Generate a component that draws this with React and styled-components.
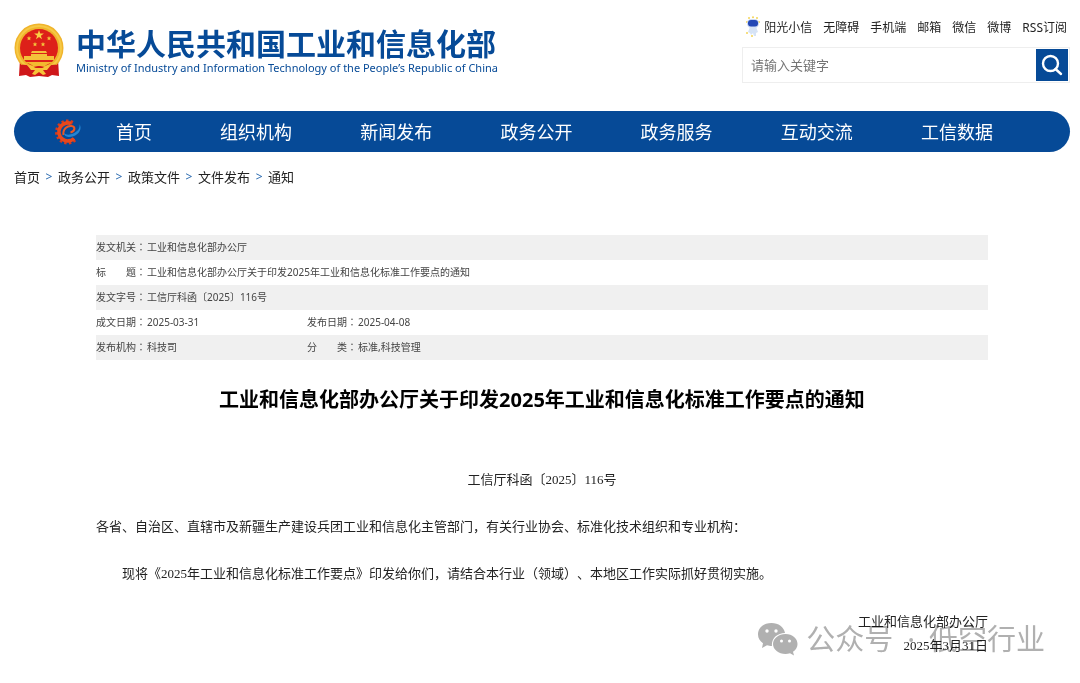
import React from "react";
import styled, { createGlobalStyle } from "styled-components";

const GlobalStyle = createGlobalStyle`
  * {
    box-sizing: border-box;
  }
  body {
    margin: 0;
    background-color: #ffffff;
    color: #222222;
    font-family: "Noto Sans", "Noto Sans CJK SC", sans-serif;
    font-size: 13px;
    text-spacing-trim: space-all;
  }
  a {
    color: inherit;
    text-decoration: none;
  }
`;

const Page = styled.div`
  padding: 16px 10px 16px 14px;
`;

const Header = styled.header`
  display: flex;
  justify-content: space-between;
  align-items: flex-start;
`;

const Brand = styled.a`
  display: flex;
  gap: 12px;
  padding-top: 7px;
`;

const BrandName = styled.h1`
  margin: 0;
  padding-top: 2px;
  color: #064a97;
  font-size: 30px;
  line-height: 37px;
  font-weight: 700;
  white-space: nowrap;
`;

const BrandSub = styled.p`
  margin: 0;
  color: #064a97;
  font-size: 11px;
  line-height: 12px;
  white-space: nowrap;
`;

const Tools = styled.div`
  width: 328px;
`;

const QuickLinks = styled.nav`
  display: flex;
  justify-content: flex-end;
  gap: 11px;
  padding-right: 3px;
  font-size: 12px;
  line-height: 24px;
  height: 31px;
  white-space: nowrap;
`;

const MascotLink = styled.a`
  display: flex;
  align-items: flex-start;
  gap: 4px;
`;

const Search = styled.form`
  display: flex;
  height: 36px;
  border: 1px solid #eeeeee;
`;

const SearchInput = styled.input`
  flex: 1;
  min-width: 0;
  border: none;
  outline: none;
  padding: 0 8px;
  font-family: inherit;
  font-size: 13px;
  &::placeholder {
    color: #757575;
  }
`;

const SearchButton = styled.button`
  display: flex;
  align-items: center;
  justify-content: center;
  width: 32px;
  height: 32px;
  margin: 1px;
  padding: 0;
  border: none;
  background-color: #064a97;
  cursor: pointer;
`;

const MainNav = styled.nav`
  display: flex;
  align-items: center;
  height: 41px;
  margin-top: 28px;
  padding: 0 43px 0 40px;
  border-radius: 21px;
  background-color: #064a97;
`;

const NavLink = styled.a`
  flex: ${(props) => (props.$home ? "0 0 104px" : "1")};
  padding-bottom: 2px;
  color: #ffffff;
  font-size: 18px;
  text-align: center;
  white-space: nowrap;
`;

const Breadcrumb = styled.nav`
  display: flex;
  gap: 5px;
  margin-top: 15px;
  line-height: 20px;
`;

const Arrow = styled.span`
  width: 8px;
  color: #2a6ab0;
  font-size: 12px;
  text-align: center;
`;

const Article = styled.main`
  margin: 48px 82px 0;
`;

const MetaTable = styled.table`
  width: 100%;
  border-collapse: collapse;
  table-layout: fixed;
  color: #444444;
  font-size: 10px;
  line-height: 15px;
`;

const MetaRow = styled.tr`
  height: 25px;
  &:nth-child(odd) {
    background-color: #f0f0f0;
  }
`;

const MetaLabel = styled.th`
  padding: 0;
  font-weight: 400;
  text-align: left;
  vertical-align: baseline;
  white-space: pre;
`;

const Colon = styled.span`
  font-family: "Noto Sans CJK TC", sans-serif;
`;

const MetaValue = styled.td`
  padding: 5px 0 4px;
  vertical-align: baseline;
`;

const Title = styled.h2`
  margin: 25px 0 0;
  color: #000000;
  font-size: 20px;
  line-height: 30px;
  text-align: center;
`;

const Content = styled.div`
  margin-top: 55px;
  font-family: "Liberation Serif", "Noto Sans CJK SC", serif;
`;

const DocNumber = styled.p`
  margin: 0;
  line-height: 20px;
  text-align: center;
`;

const Paragraph = styled.p`
  margin: 27px 0 0;
  line-height: 20px;
  text-indent: ${(props) => (props.$indent ? "2em" : "0")};
`;

const Signature = styled.div`
  position: relative;
  margin-top: 26px;
  line-height: 24px;
  text-align: right;
`;

const Watermark = styled.div`
  position: absolute;
  right: -57px;
  top: 5px;
  display: flex;
  align-items: center;
  gap: 14px;
  color: #b0b0b0;
  font-family: "Noto Sans", "Noto Sans CJK SC", sans-serif;
  font-size: 29px;
  line-height: 48px;
  white-space: nowrap;
  mix-blend-mode: multiply;
`;

const WatermarkName = styled.span`
  display: flex;
  align-items: center;
  gap: 8px;
`;

const Emblem = () => (
  <svg width="50" height="56" viewBox="0 0 50 56" aria-hidden="true">
    <path d="M6 36 5 53l7-1 4 2 9-1 9 1 4-2 7 1-1-17z" fill="#cf171a" />
    <circle cx="25" cy="25" r="24.500" fill="#f0b42c" />
    <circle cx="25" cy="25" r="22" fill="none" stroke="#f6c945" strokeWidth="2" />
    <circle cx="25" cy="25" r="19" fill="#dd2019" />
    <path d="m25 7 1.200 3.500h3.700l-3 2.200 1.100 3.600-3-2.200-3 2.200 1.100-3.600-3-2.200h3.700z" fill="#f9cf45" />
    <g fill="#f4c23a">
      <path d="m15 13 .7 1.400 1.600.2-1.200 1 .3 1.600-1.400-.8-1.400.8.3-1.600-1.200-1 1.600-.2zM35 13l.7 1.400 1.600.2-1.200 1 .3 1.600-1.400-.8-1.400.8.3-1.600-1.200-1 1.600-.2zM21 19l.7 1.400 1.600.2-1.200 1 .3 1.600-1.400-.8-1.400.8.3-1.600-1.200-1 1.600-.2zM29 19l.7 1.400 1.600.2-1.200 1 .3 1.600-1.400-.8-1.400.8.3-1.600-1.200-1 1.600-.2z" />
      <path d="M18 28h14l1 2H17zM17 31h16v2h7v4H10v-4h7z" />
    </g>
    <path d="M10 39h30c-4 1-7 2-9 4h-12c-2-2-5-3-9-4z" fill="#f3b92f" />
    <path d="M7 42c5-1 9 1 12 3l6-2 6 2c3-2 7-4 12-3l1 9-8-2-5 4-6-3-6 3-5-4-8 2z" fill="#cf171a" />
    <path d="M13 42c4 0 6 1 8 3h8c2-2 4-3 8-3l-4 5h-4l3 4-3 1-4-3-4 3-3-1 3-4h-4z" fill="#f7c33a" />
  </svg>
);

const Mascot = () => (
  <svg width="14" height="22" viewBox="0 0 14 22" aria-hidden="true">
    <g fill="#f3d458">
      <circle cx="3" cy="2" r="1" />
      <circle cx="7" cy="1.200" r="1" />
      <circle cx="11" cy="2" r="1" />
      <circle cx="1" cy="6" r="1" />
      <circle cx="13" cy="6" r="1" />
      <circle cx="1" cy="17" r="1" />
      <circle cx="6" cy="20" r="1" />
    </g>
    <rect x="1" y="3" width="12" height="9" rx="4.500" fill="#cbd9f3" />
    <rect x="2" y="4" width="10" height="6.500" rx="3" fill="#2448b5" />
    <path d="M4 11h6l2 5-2 1v3H8l-1-3-2 2-1-2-2-1z" fill="#d6e3f5" />
  </svg>
);

const SearchIcon = () => (
  <svg width="22" height="22" viewBox="0 0 22 22" fill="none" stroke="#ffffff" strokeWidth="2.400" aria-hidden="true">
    <circle cx="9.500" cy="9.500" r="7.500" />
    <path d="m14.500 15 5.500 5" strokeLinecap="round" />
  </svg>
);

const TEETH = [54, 78, 102, 126, 150, 174, 198, 222, 246, 270, 294];

const GearLogo = () => (
  <svg width="28" height="28" viewBox="0 0 28 28" fill="none" aria-hidden="true">
    {TEETH.map((angle) => (
      <rect key={angle} x="22" y="12.500" width="4" height="2.500" fill="#d83a1c" transform={`rotate(${angle} 13.500 14)`} />
    ))}
    <path d="M17 5.500A9 9 0 1 0 20 20.500" stroke="#e8481c" strokeWidth="3.600" />
    <path d="M9.500 17c-1-6 4-9.500 8-9 4 .600 4 5-1 6.500" stroke="#ee5722" strokeWidth="2" />
    <path d="M25.500 6c4 7-4 13.500-11 13-3-.3-4.500-2-4.500-4 2 1.800 4 2 7 1.200 5-1.400 9.500-5 8.500-10.200z" fill="#2385d2" />
  </svg>
);

const WechatIcon = () => (
  <svg width="41" height="34" viewBox="0 0 41 34" aria-hidden="true">
    <path d="M14.500 1C6.500 1 1 6 1 12.500c0 3.800 2 6.700 5 8.800L5 26l5-2.700c1.600.5 3 .7 5 .7-1-7 5-13 13-13C27 5 21.500 1 14.500 1z" fill="#b0b0b0" />
    <path d="M28.500 12C21.500 12 16 16.500 16 22s5.500 10 12.500 10c1.500 0 3-.3 4.500-.7l4 2.200-1-3.700c3-2 4.500-4.800 4.500-7.800 0-5.500-5-10-12-10z" fill="#b0b0b0" />
    <g fill="#ffffff">
      <circle cx="10" cy="9" r="1.700" />
      <circle cx="19" cy="9" r="1.700" />
      <circle cx="24.500" cy="19" r="1.500" />
      <circle cx="32.500" cy="19" r="1.500" />
    </g>
  </svg>
);

const quickLinks = ["无障碍", "手机端", "邮箱", "微信", "微博", "RSS订阅"];
const navItems = ["组织机构", "新闻发布", "政务公开", "政务服务", "互动交流", "工信数据"];
const crumbs = ["首页", "政务公开", "政策文件", "文件发布", "通知"];

const meta = [
  [["发文机关", "工业和信息化部办公厅"]],
  [["标　　题", "工业和信息化部办公厅关于印发2025年工业和信息化标准工作要点的通知"]],
  [["发文字号", "工信厅科函〔2025〕116号"]],
  [["成文日期", "2025-03-31"], ["发布日期", "2025-04-08"]],
  [["发布机构", "科技司"], ["分　　类", "标准,科技管理"]],
];

const App = () => {
  return (
    <>
      <GlobalStyle />
      <Page lang="zh-CN">
        <Header>
          <Brand href="#">
            <Emblem />
            <div>
              <BrandName>中华人民共和国工业和信息化部</BrandName>
              <BrandSub>Ministry of Industry and Information Technology of the People’s Republic of China</BrandSub>
            </div>
          </Brand>
          <Tools>
            <QuickLinks>
              <MascotLink href="#">
                <Mascot />
                阳光小信
              </MascotLink>
              {quickLinks.map((text) => (
                <a key={text} href="#">
                  {text}
                </a>
              ))}
            </QuickLinks>
            <Search onSubmit={(e) => e.preventDefault()}>
              <SearchInput type="text" placeholder="请输入关键字" aria-label="请输入关键字" />
              <SearchButton type="submit" aria-label="搜索">
                <SearchIcon />
              </SearchButton>
            </Search>
          </Tools>
        </Header>

        <MainNav>
          <GearLogo />
          <NavLink href="#" $home>
            首页
          </NavLink>
          {navItems.map((text) => (
            <NavLink key={text} href="#">
              {text}
            </NavLink>
          ))}
        </MainNav>

        <Breadcrumb>
          {crumbs.map((text, i) => (
            <React.Fragment key={text}>
              {i > 0 && <Arrow>&gt;</Arrow>}
              <a href="#">{text}</a>
            </React.Fragment>
          ))}
        </Breadcrumb>

        <Article>
          <MetaTable>
            <colgroup>
              <col width="51" />
              <col width="160" />
              <col width="51" />
              <col />
            </colgroup>
            <tbody>
              {meta.map((cells) => (
                <MetaRow key={cells[0][0]}>
                  {cells.map(([label, value]) => (
                    <React.Fragment key={label}>
                      <MetaLabel scope="row">
                        {label}
                        <Colon lang="zh-TW">：</Colon>
                      </MetaLabel>
                      <MetaValue colSpan={cells.length === 1 ? 3 : 1}>{value}</MetaValue>
                    </React.Fragment>
                  ))}
                </MetaRow>
              ))}
            </tbody>
          </MetaTable>

          <Title>工业和信息化部办公厅关于印发2025年工业和信息化标准工作要点的通知</Title>

          <Content>
            <DocNumber>工信厅科函〔2025〕116号</DocNumber>
            <Paragraph>各省、自治区、直辖市及新疆生产建设兵团工业和信息化主管部门，有关行业协会、标准化技术组织和专业机构：</Paragraph>
            <Paragraph $indent>现将《2025年工业和信息化标准工作要点》印发给你们，请结合本行业（领域）、本地区工作实际抓好贯彻实施。</Paragraph>
            <Signature>
              <Watermark>
                <WatermarkName>
                  <WechatIcon />
                  公众号
                </WatermarkName>
                <span>·</span>
                <span>低空行业</span>
              </Watermark>
              <div>工业和信息化部办公厅</div>
              <div>2025年3月31日</div>
            </Signature>
          </Content>
        </Article>
      </Page>
    </>
  );
};

export default App;
